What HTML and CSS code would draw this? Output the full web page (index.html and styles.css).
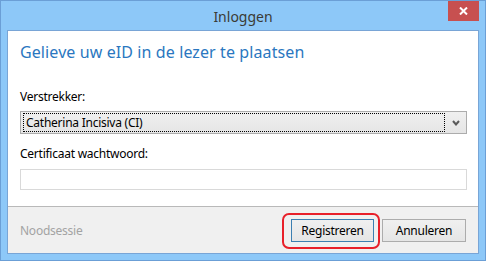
FILE: index.html
```html
<!DOCTYPE html>
<html lang="nl">
<head>
  <meta charset="UTF-8" />
  <title>Inloggen</title>
  <link rel="stylesheet" href="styles.css">
</head>
<body>
  <div class="window">
    <div class="titlebar">
      <span class="title">Inloggen</span>
      <button class="close-btn" aria-label="Sluiten">
        <svg width="9" height="8" viewBox="0 0 9 8">
          <path d="M1 0.5 L8 7.5 M8 0.5 L1 7.5" stroke="#fff" stroke-width="2" fill="none" />
        </svg>
      </button>
    </div>

    <div class="client">
      <div class="content">
        <h1 class="instruction">Gelieve uw eID in de lezer te plaatsen</h1>

        <label class="field-label">Verstrekker:</label>
        <div class="combo">
          <span class="combo-value">Catherina Incisiva (CI)</span>
          <svg class="combo-arrow" width="8" height="6" viewBox="0 0 8 6">
            <path d="M1 1 L4 4.5 L7 1" stroke="#5a5a5a" stroke-width="2" fill="none" />
          </svg>
        </div>

        <label class="field-label second">Certificaat wachtwoord:</label>
        <div class="text-input"></div>
      </div>

      <div class="footer">
        <span class="emergency">Noodsessie</span>
        <div class="actions">
          <span class="highlight">
            <button class="btn btn-default">Registreren</button>
          </span>
          <button class="btn">Annuleren</button>
        </div>
      </div>
    </div>
  </div>
</body>
</html>
```

FILE: styles.css
```css
* {
  box-sizing: border-box;
  margin: 0;
  padding: 0;
}

html, body {
  width: 486px;
  height: 261px;
  overflow: hidden;
  font-family: "Noto Sans", "Open Sans", sans-serif;
  font-size: 12px;
  letter-spacing: -0.25px;
  color: #000;
}

.window {
  width: 486px;
  height: 261px;
  border: 1px solid #6b9fd6;
  background: #8dc8f8;
  padding: 0 6px 6px;
  display: flex;
  flex-direction: column;
}

.titlebar {
  height: 29px;
  position: relative;
  display: flex;
  justify-content: center;
  align-items: center;
}

.title {
  font-size: 14px;
  letter-spacing: 0;
  color: #3b3b35;
  margin-top: 2px;
}

.close-btn {
  position: absolute;
  top: 0;
  right: 0;
  width: 31px;
  height: 20px;
  border: none;
  background: #c75050;
  display: flex;
  justify-content: center;
  align-items: center;
}

.client {
  flex: 1;
  border: 1px solid #79a5d6;
  background: #f0f0f0;
  display: flex;
  flex-direction: column;
}

.content {
  background: #fff;
  padding: 11px 11px 16px 12px;
  display: flex;
  flex-direction: column;
}

.instruction {
  font-size: 16px;
  line-height: 20px;
  letter-spacing: 0.1px;
  font-weight: normal;
  color: #2a77c0;
  margin-bottom: 27px;
}

.field-label {
  display: block;
  line-height: 16px;
  margin-bottom: 6px;
}

.field-label.second {
  margin-top: 12px;
  margin-bottom: 7px;
}

.combo {
  height: 23px;
  border: 1px solid #acacac;
  background: linear-gradient(#f0f0f0, #e5e5e5);
  display: flex;
  align-items: center;
  padding: 0 6px 0 2px;
}

.combo-value {
  flex: 1;
  height: 19px;
  line-height: 17px;
  padding-left: 2px;
  border: 1px dotted #000;
}

.combo-arrow {
  margin-left: 7px;
}

.text-input {
  height: 21px;
  border: 1px solid #d9d9d9;
  background: #fff;
}

.footer {
  flex: 1;
  border-top: 1px solid #b9b9b9;
  display: flex;
  justify-content: space-between;
  align-items: center;
  padding: 0 12px;
}

.emergency {
  color: #a3a3a3;
}

.actions {
  display: flex;
  gap: 8px;
}

.highlight {
  position: relative;
  display: flex;
}

.highlight::after {
  content: "";
  position: absolute;
  left: -9px;
  right: -6px;
  top: -6px;
  bottom: -7px;
  border: 2px solid #e8202a;
  border-radius: 7px;
  pointer-events: none;
}

.btn {
  width: 84px;
  height: 23px;
  border: 1px solid #acacac;
  background: linear-gradient(#f0f0f0, #e5e5e5);
  font-family: inherit;
  font-size: 12px;
  letter-spacing: -0.25px;
  color: #000;
}

.btn-default {
  width: 83px;
  border-color: #3c7fb1;
}
```
